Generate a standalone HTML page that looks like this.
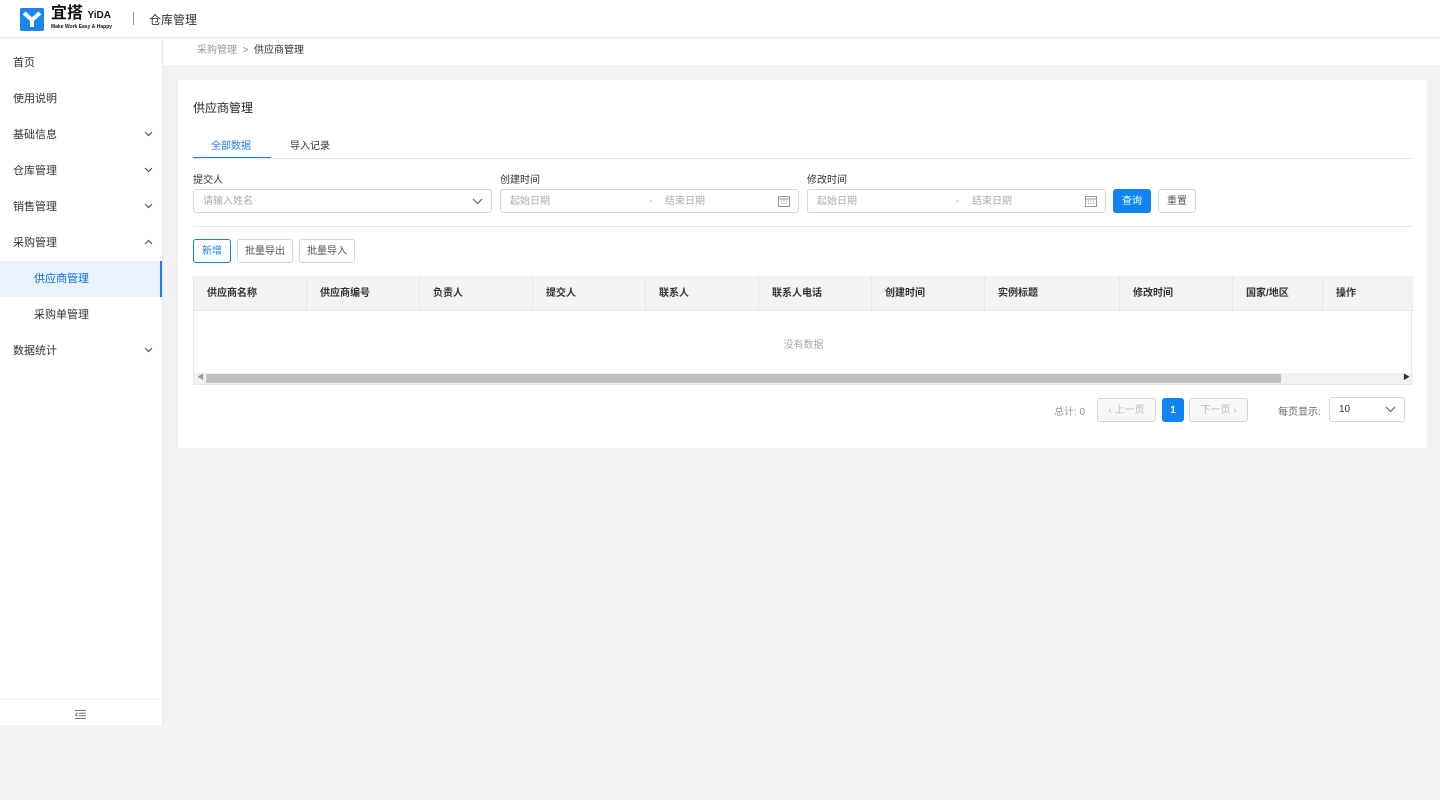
<!DOCTYPE html><html><head><meta charset="utf-8"><style>
*{box-sizing:border-box;margin:0;padding:0}
body{width:1440px;height:800px;background:#f1f2f4;font-family:"Liberation Sans","Noto Sans CJK SC",sans-serif;font-size:12px;color:#333;position:relative;overflow:hidden}
.top{position:absolute;left:0;top:0;width:1440px;height:38px;background:#fff;border-bottom:1px solid #e8e8e8}
.side{position:absolute;left:0;top:39px;width:163px;height:686px;background:#fff;border-right:1px solid #e8e8e8}
.mi{height:36px;line-height:36px;padding-left:13px;font-size:11px;color:#333;position:relative}
.mi svg{position:absolute;right:9px;top:14px}
.sub{padding-left:34px}
.act{background:#e8f3ff;color:#0a6fd6;border-right:2px solid #1b7fe8}
.bc{position:absolute;left:163px;top:39px;width:1277px;height:26px;background:#fff;font-size:10px;color:#999;padding-left:34px;line-height:24px}
.card{position:absolute;left:178px;top:80px;width:1249px;height:368px;background:#fff}
.abs{position:absolute}
.inp{position:absolute;height:24px;border:1px solid #d4d6da;border-radius:3px;font-size:10px;color:#aaa;line-height:23px;padding-left:9px}
.inp svg{position:absolute;right:8px;top:8px}
.btn{position:absolute;height:24px;border:1px solid #d4d6da;border-radius:3px;font-size:10px;color:#555;line-height:23px;text-align:center;background:#fff}
.th{position:absolute;top:0;height:35px;line-height:35px;font-size:10px;font-weight:bold;color:#333;border-right:1px solid #e4e6ea;padding-left:13px}
</style></head><body>
<div class="top">
<svg class="abs" style="left:20px;top:8px" width="24" height="23" viewBox="0 0 24 23"><rect width="24" height="23" rx="2" fill="#1b86f0"/><path d="M4 5 L12 12 L20 5 M12 12 V19" stroke="#fff" stroke-width="4" fill="none"/></svg>
<div class="abs" style="left:51px;top:6px;font-size:16px;line-height:16px;font-weight:bold;color:#111">宜搭 <span style="font-size:10px">YiDA</span></div>
<div class="abs" style="left:51px;top:25px;font-size:5px;line-height:5px;font-weight:bold;color:#111;white-space:nowrap">Make Work Easy &amp; Happy</div>
<div class="abs" style="left:133px;top:12px;width:1px;height:13px;background:#999"></div>
<div class="abs" style="left:149px;top:11px;font-size:12px;color:#333">仓库管理</div>
</div>
<div class="side">
<div class="mi" style="margin-top:6px">首页</div>
<div class="mi">使用说明</div>
<div class="mi">基础信息<svg width="9" height="6" viewBox="0 0 9 6"><path d="M1 1l3.5 3.5L8 1" stroke="#555" fill="none" stroke-width="1.2"/></svg></div>
<div class="mi">仓库管理<svg width="9" height="6" viewBox="0 0 9 6"><path d="M1 1l3.5 3.5L8 1" stroke="#555" fill="none" stroke-width="1.2"/></svg></div>
<div class="mi">销售管理<svg width="9" height="6" viewBox="0 0 9 6"><path d="M1 1l3.5 3.5L8 1" stroke="#555" fill="none" stroke-width="1.2"/></svg></div>
<div class="mi">采购管理<svg width="9" height="6" viewBox="0 0 9 6"><path d="M1 5l3.5-3.5L8 5" stroke="#555" fill="none" stroke-width="1.2"/></svg></div>
<div class="mi sub act">供应商管理</div>
<div class="mi sub">采购单管理</div>
<div class="mi">数据统计<svg width="9" height="6" viewBox="0 0 9 6"><path d="M1 1l3.5 3.5L8 1" stroke="#555" fill="none" stroke-width="1.2"/></svg></div>
<div class="abs" style="left:0;top:660px;width:162px;border-top:1px solid #eee;height:26px"><svg class="abs" style="left:75px;top:10px" width="11" height="9" viewBox="0 0 11 9"><path d="M0 .5h11M4 3.2h7M4 5.8h7M0 8.5h11M2.5 2.5L0.5 4.5l2 2" stroke="#777" fill="none" stroke-width="1"/></svg></div>
</div>
<div class="bc">采购管理 &nbsp;<span style="color:#888">&gt;</span>&nbsp; <span style="color:#333">供应商管理</span></div>
<div class="card">
<div class="abs" style="left:15px;top:19px;font-size:12px;color:#222">供应商管理</div>
<div class="abs" style="left:33px;top:57px;font-size:10px;color:#1b7fe8">全部数据</div>
<div class="abs" style="left:112px;top:57px;font-size:10px;color:#333">导入记录</div>
<div class="abs" style="left:15px;top:77px;width:78px;height:2px;background:#1b7fe8"></div>
<div class="abs" style="left:15px;top:78px;width:1219px;height:1px;background:#e8e8e8"></div>
<div class="abs" style="left:15px;top:91px;font-size:10px">提交人</div>
<div class="abs" style="left:322px;top:91px;font-size:10px">创建时间</div>
<div class="abs" style="left:629px;top:91px;font-size:10px">修改时间</div>
<div class="inp" style="left:15px;top:109px;width:299px">请输入姓名<svg width="11" height="7" viewBox="0 0 11 7"><path d="M1 1l4.5 4.5L10 1" stroke="#666" fill="none" stroke-width="1.2"/></svg></div>
<div class="inp" style="left:322px;top:109px;width:299px">起始日期<span class="abs" style="left:148px">-</span><span class="abs" style="left:164px">结束日期</span><svg style="top:5px" width="12" height="12" viewBox="0 0 12 12"><rect x=".5" y="1.5" width="11" height="10" fill="none" stroke="#999"/><path d="M.5 4h11M3 6h1M5.5 6h1M8 6h1M3 8.5h1M5.5 8.5h1M8 8.5h1" stroke="#999"/></svg></div>
<div class="inp" style="left:629px;top:109px;width:299px">起始日期<span class="abs" style="left:148px">-</span><span class="abs" style="left:164px">结束日期</span><svg style="top:5px" width="12" height="12" viewBox="0 0 12 12"><rect x=".5" y="1.5" width="11" height="10" fill="none" stroke="#999"/><path d="M.5 4h11M3 6h1M5.5 6h1M8 6h1M3 8.5h1M5.5 8.5h1M8 8.5h1" stroke="#999"/></svg></div>
<div class="btn" style="left:935px;top:109px;width:38px;background:#0f84f4;border-color:#0f84f4;color:#fff">查询</div>
<div class="btn" style="left:980px;top:109px;width:38px">重置</div>
<div class="abs" style="left:15px;top:146px;width:1219px;height:1px;background:#e8e8e8"></div>
<div class="btn" style="left:15px;top:159px;width:38px;border-color:#1b7fe8;color:#1b7fe8">新增</div>
<div class="btn" style="left:59px;top:159px;width:56px">批量导出</div>
<div class="btn" style="left:121px;top:159px;width:56px">批量导入</div>
<div class="abs" style="left:15px;top:196px;width:1219px;height:109px;border:1px solid #e8e8e8;border-top:0">
<div class="abs" style="left:0;top:0;width:1219px;height:35px;background:#f2f3f5;border-bottom:1px solid #e4e6ea">
<div class="th" style="left:0;width:113px">供应商名称</div><div class="th" style="left:113px;width:113px">供应商编号</div><div class="th" style="left:226px;width:113px">负责人</div><div class="th" style="left:339px;width:113px">提交人</div><div class="th" style="left:452px;width:113px">联系人</div><div class="th" style="left:565px;width:113px">联系人电话</div><div class="th" style="left:678px;width:113px">创建时间</div><div class="th" style="left:791px;width:135px">实例标题</div><div class="th" style="left:926px;width:113px">修改时间</div><div class="th" style="left:1039px;width:90px">国家/地区</div><div class="th" style="left:1129px;width:90px;border:0">操作</div>
</div>
<div class="abs" style="left:0;top:60px;width:1219px;text-align:center;font-size:10px;color:#aaa">没有数据</div>
<div class="abs" style="left:0;top:97px;width:1219px;height:11px;background:#f1f1f1"><div class="abs" style="left:12px;top:1px;width:1075px;height:9px;background:#c1c1c1"></div><span class="abs" style="left:3px;top:-1px;font-size:7px;color:#999">◀</span><span class="abs" style="right:3px;top:-1px;font-size:7px;color:#333">▶</span></div>
</div>
<div class="abs" style="left:876px;top:323px;font-size:10px;color:#999">总计: 0</div>
<div class="btn" style="left:919px;top:318px;width:59px;color:#bbb;background:#f7f7f7">‹ 上一页</div>
<div class="btn" style="left:984px;top:318px;width:22px;background:#0f84f4;border-color:#0f84f4;color:#fff;font-weight:bold">1</div>
<div class="btn" style="left:1011px;top:318px;width:59px;color:#bbb;background:#f7f7f7">下一页 ›</div>
<div class="abs" style="left:1100px;top:323px;font-size:10px;color:#666">每页显示:</div>
<div class="inp" style="left:1151px;top:317px;width:76px;height:25px;color:#333">10<svg width="11" height="7" viewBox="0 0 11 7"><path d="M1 1l4.5 4.5L10 1" stroke="#666" fill="none" stroke-width="1.2"/></svg></div>
</div>
</body></html>
